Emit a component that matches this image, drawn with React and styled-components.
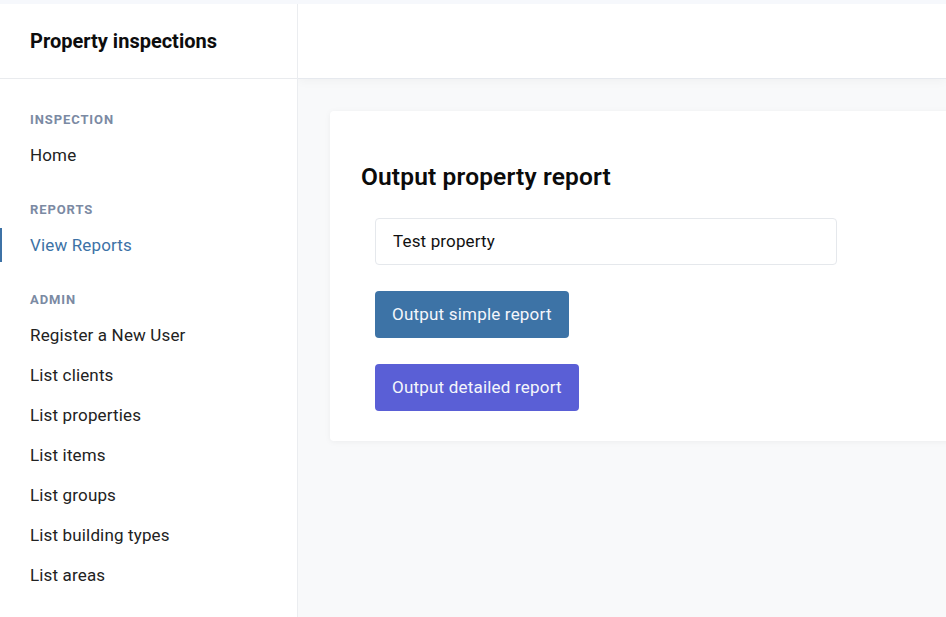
import React from "react";
import styled, { createGlobalStyle } from "styled-components";

const Global = createGlobalStyle`
  html, body { margin: 0; padding: 0; height: 100%; }
  body {
    font-family: Roboto, "Noto Sans", "Liberation Sans", sans-serif;
    background: #f8f9fa;
    color: #111;
    overflow: hidden;
  }
  #root { height: 100%; }
  * { box-sizing: border-box; }
`;

const Shell = styled.div`
  display: flex;
  flex-direction: column;
  height: 100vh;
`;

const TopStrip = styled.div`
  height: 4px;
  flex: none;
  background: #f6f8fc;
`;

const Body = styled.div`
  flex: 1;
  display: grid;
  grid-template-columns: 298px 1fr;
  min-height: 0;
`;

const Sidebar = styled.aside`
  background: #fff;
  border-right: 1px solid #ebedf0;
  display: flex;
  flex-direction: column;
`;

const Brand = styled.div`
  height: 75px;
  display: flex;
  align-items: center;
  padding-left: 30px;
  border-bottom: 1px solid #e9ebee;
  font-size: 20px;
  font-weight: 700;
  color: #0d0d0d;
`;

const Nav = styled.nav`
  padding-top: 31px;
  display: flex;
  flex-direction: column;
`;

const Section = styled.div`
  display: flex;
  flex-direction: column;
  gap: 6px;
  margin-bottom: 28px;
`;

const SectionLabel = styled.div`
  font-size: 13px;
  font-weight: 700;
  line-height: 20px;
  letter-spacing: 0.9px;
  text-transform: uppercase;
  color: #7b8aa3;
  padding-left: 30px;
  margin-bottom: 2px;
`;

const NavItem = styled.a`
  position: relative;
  display: flex;
  align-items: center;
  height: 34px;
  padding-left: 30px;
  font-size: 17px;
  letter-spacing: 0.15px;
  color: ${(p) => (p.$active ? "#3d72a6" : "#222")};
  text-decoration: none;
  ${(p) =>
    p.$active &&
    `
    &::before {
      content: "";
      position: absolute;
      left: 0;
      top: 0;
      bottom: 0;
      width: 2px;
      background: #3d72a6;
    }
  `}
`;

const Main = styled.main`
  display: flex;
  flex-direction: column;
  min-width: 0;
  overflow: hidden;
`;

const Header = styled.header`
  height: 75px;
  flex: none;
  background: #fff;
  border-bottom: 1px solid #e6e9ee;
  box-shadow: 0 2px 10px rgba(0, 0, 0, 0.04);
`;

const Content = styled.div`
  padding: 32px 0 0 32px;
`;

const Card = styled.section`
  width: 660px;
  background: #fff;
  border-radius: 4px;
  box-shadow: 0 1px 6px rgba(0, 0, 0, 0.05);
  padding: 52px 31px 30px;
`;

const Title = styled.h2`
  margin: 0 0 27px;
  font-size: 24.5px;
  line-height: 28px;
  font-weight: 600;
  letter-spacing: 0.15px;
  color: #0b0b0b;
`;

const Form = styled.div`
  padding-left: 14px;
  display: flex;
  flex-direction: column;
  align-items: flex-start;
  gap: 26px;
`;

const Field = styled.div`
  width: 462px;
  height: 47px;
  border: 1px solid #e5e8ec;
  border-radius: 4px;
  display: flex;
  align-items: center;
  padding-left: 17px;
  padding-bottom: 2px;
  font-size: 17px;
  letter-spacing: 0.15px;
  color: #111;
`;

const Button = styled.button`
  height: 47px;
  border: none;
  border-radius: 4px;
  padding: 0 17px 2px;
  font-family: inherit;
  font-size: 17px;
  letter-spacing: 0.2px;
  color: #f4f6fb;
  background: ${(p) => (p.$variant === "detailed" ? "#5a5fd6" : "#3d73a6")};
  cursor: pointer;
`;

const sections = [
  { label: "Inspection", items: ["Home"] },
  { label: "Reports", items: ["View Reports"], active: "View Reports" },
  {
    label: "Admin",
    items: [
      "Register a New User",
      "List clients",
      "List properties",
      "List items",
      "List groups",
      "List building types",
      "List areas",
    ],
  },
];

export default function App() {
  return (
    <Shell>
      <Global />
      <TopStrip />
      <Body>
        <Sidebar>
          <Brand>Property inspections</Brand>
          <Nav>
            {sections.map((s) => (
              <Section key={s.label}>
                <SectionLabel>{s.label}</SectionLabel>
                {s.items.map((it) => (
                  <NavItem key={it} href="#" $active={s.active === it}>
                    {it}
                  </NavItem>
                ))}
              </Section>
            ))}
          </Nav>
        </Sidebar>
        <Main>
          <Header />
          <Content>
            <Card>
              <Title>Output property report</Title>
              <Form>
                <Field>Test property</Field>
                <Button>Output simple report</Button>
                <Button $variant="detailed">Output detailed report</Button>
              </Form>
            </Card>
          </Content>
        </Main>
      </Body>
    </Shell>
  );
}
